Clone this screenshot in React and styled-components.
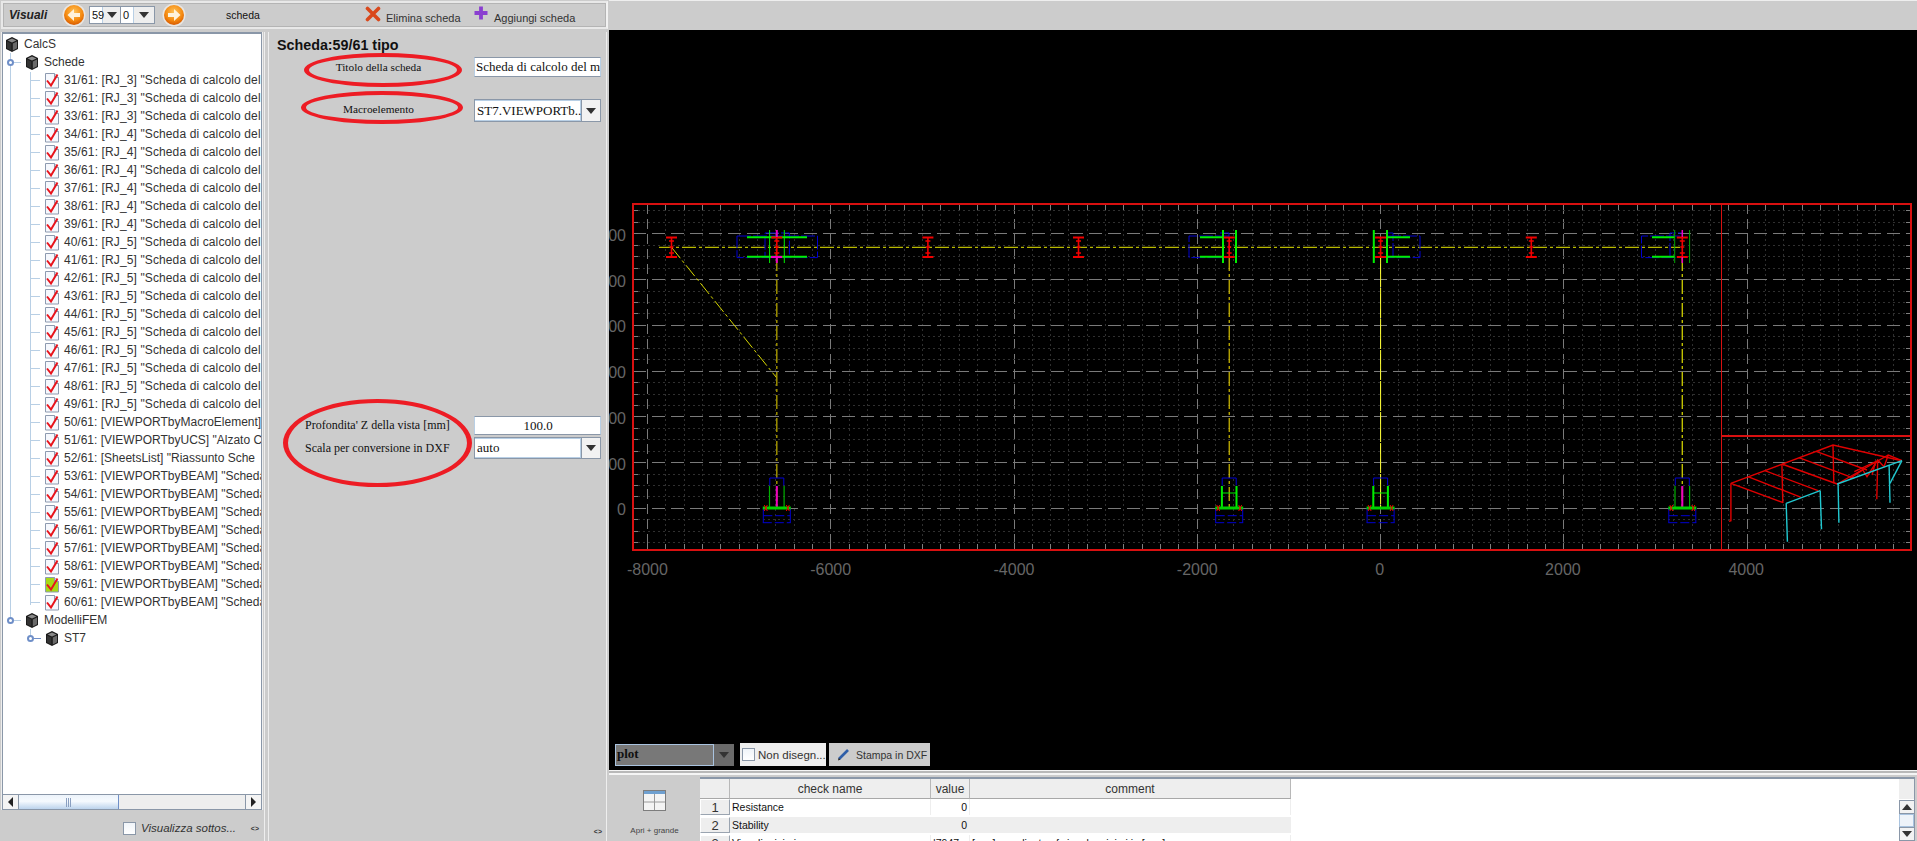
import React from "react";
import styled, { createGlobalStyle } from "styled-components";

const GlobalStyle = createGlobalStyle`
  html, body {
    margin: 0;
    padding: 0;
    background: #cccccc;
    overflow: hidden;
  }
  * {
    box-sizing: border-box;
  }
`;

const Page = styled.div`
  width: 1917px;
  height: 841px;
  display: grid;
  grid-template-columns: 609px 1308px;
  overflow: hidden;
  background: #cccccc;
  color: #333333;
  font-family: "Liberation Sans", Arial, sans-serif;
  font-size: 12px;
`;

const LeftColumn = styled.div`
  display: flex;
  flex-direction: column;
  height: 841px;
  padding: 1px 0 0 1px;
`;

const Toolbar = styled.div`
  height: 28px;
  width: 607px;
  flex: none;
  display: flex;
  align-items: center;
  border: 2px solid #e8e8e8;
  border-right-color: #f2f2f2;
  box-shadow: inset 0 0 0 1px #b4b4b4;
  padding: 0 0 0 6px;
`;

const ToolbarTitle = styled.span`
  font-weight: bold;
  font-style: italic;
  font-size: 12px;
  width: 53px;
  color: #222222;
`;

const NavIcon = styled.svg`
  width: 24px;
  height: 24px;
  flex: none;
`;

const Spinner = styled.div`
  display: flex;
  height: 18px;
  margin: 0 7px 0 3px;
  border: 1px solid #8a97a8;
  background: #eeeeee;
`;

const SpinValue = styled.span`
  width: ${(p) => p.$w}px;
  background: #ffffff;
  font-size: 11px;
  line-height: 16px;
  color: #111111;
  padding-left: 2px;
  border-right: 1px solid #b8cfe5;
`;

const SpinArrow = styled.span`
  width: ${(p) => p.$w}px;
  display: flex;
  align-items: center;
  justify-content: center;
  border-right: 1px solid #8a97a8;
  &:last-child {
    border-right: 0;
  }
`;

const ArrowDown = styled.i`
  width: 0;
  height: 0;
  border-left: 5px solid transparent;
  border-right: 5px solid transparent;
  border-top: 6px solid #333333;
`;

const ArrowUp = styled(ArrowDown)`
  border-top: 0;
  border-bottom: 6px solid #333333;
`;

const SheetWord = styled.span`
  font-size: 10.5px;
  color: #111111;
  margin-left: 40px;
  width: 139px;
`;

const ActionIcon = styled.svg`
  width: 16px;
  height: 16px;
  flex: none;
  margin-top: ${(p) => p.$top || 0}px;
`;

const ActionText = styled.span`
  font-size: 11px;
  color: #333333;
  margin: 5px 0 0 5px;
  width: ${(p) => p.$w}px;
`;

const Body = styled.div`
  flex: 1;
  display: grid;
  grid-template-columns: 264px 1fr;
  column-gap: 3px;
  padding-top: 3px;
  min-height: 0;
`;

const TreePanel = styled.div`
  display: flex;
  flex-direction: column;
  border-right: 1px solid #eeeeee;
`;

const TreeBox = styled.div`
  height: 778px;
  flex: none;
  margin-left: 1px;
  display: flex;
  flex-direction: column;
  background: #ffffff;
  border: 1px solid #8a97a8;
  border-top-width: 2px;
  border-bottom: 0;
  width: 260px;
  box-shadow: -1px 0 0 #eeeeee, 1px 0 0 #eeeeee;
`;

const Tree = styled.div`
  flex: 1;
  position: relative;
  overflow: hidden;
  padding-top: 1px;
`;

const TreeRow = styled.div`
  position: relative;
  height: 18px;
  display: flex;
  align-items: center;
  gap: 4px;
  padding-left: ${(p) => p.$level * 20 + 1}px;
  white-space: nowrap;
  &::before {
    content: "";
    display: ${(p) => (p.$leaf ? "block" : "none")};
    position: absolute;
    left: 27px;
    top: 9px;
    width: 10px;
    border-top: 1px solid #b8cfe5;
  }
`;

const RowText = styled.span`
  font-size: 12px;
  color: #333333;
  letter-spacing: ${(p) => p.$spacing || 0}px;
`;

const TreeLine = styled.span`
  position: absolute;
  left: ${(p) => p.$x}px;
  top: ${(p) => p.$y}px;
  height: ${(p) => p.$h}px;
  border-left: 1px solid #b8cfe5;
`;

const Handle = styled.span`
  position: absolute;
  left: ${(p) => p.$x}px;
  top: 6px;
  width: 7px;
  height: 7px;
  border-radius: 50%;
  background: #ffffff;
  border: 2px solid #6f8fc8;
  &::after {
    content: "";
    position: absolute;
    left: 5px;
    top: 1px;
    width: 7px;
    border-top: 1px solid ${(p) => (p.$closed ? "#6f8fc8" : "#b8cfe5")};
  }
`;

const RowIcon = styled.svg`
  width: 16px;
  height: 17px;
  flex: none;
`;

const HScroll = styled.div`
  height: 16px;
  flex: none;
  display: flex;
  border-top: 1px solid #8a97a8;
  border-bottom: 1px solid #8a97a8;
  background: #eeeeee;
`;

const HButton = styled.div`
  width: 16px;
  display: flex;
  align-items: center;
  justify-content: center;
  background: #f4f4f4;
  border-right: 1px solid #8a97a8;
  &:last-child {
    border-right: 0;
    border-left: 1px solid #8a97a8;
  }
`;

const ArrowLeft = styled.i`
  width: 0;
  height: 0;
  border-top: 5px solid transparent;
  border-bottom: 5px solid transparent;
  border-right: 5px solid #222222;
`;

const ArrowRight = styled.i`
  width: 0;
  height: 0;
  border-top: 5px solid transparent;
  border-bottom: 5px solid transparent;
  border-left: 5px solid #222222;
`;

const HThumb = styled.div`
  width: 100px;
  display: flex;
  align-items: center;
  justify-content: center;
  gap: 1px;
  background: linear-gradient(#ecf3fb, #f6fafe 45%, #bcd3ec);
  border-right: 1px solid #6f8fc8;
`;

const Grip = styled.i`
  width: 1px;
  height: 9px;
  background: #8a9fc0;
`;

const HTrack = styled.div`
  flex: 1;
`;

const TreeFooter = styled.div`
  flex: 1;
  display: flex;
  align-items: center;
  padding: 5px 5px 0 122px;
`;

const CheckBox = styled.span`
  width: 13px;
  height: 13px;
  flex: none;
  border: 1px solid #8a97a8;
  background: linear-gradient(#f0f4f9, #ffffff);
`;

const FooterLabel = styled.span`
  font-size: 11.5px;
  font-style: italic;
  margin-left: 5px;
  width: 110px;
  color: #333333;
`;

const Grabber = styled.span`
  font-size: 7px;
  font-weight: bold;
  color: #333333;
  letter-spacing: 0;
`;

const FormPanel = styled.div`
  position: relative;
  display: flex;
  flex-direction: column;
  padding-top: 4px;
  width: 339px;
  border-left: 1px solid #eeeeee;
  border-right: 1px solid #eeeeee;
`;

const FormTitle = styled.h1`
  margin: 0 0 0 8px;
  height: 18px;
  line-height: 18px;
  font-size: 14.3px;
  font-weight: bold;
  color: #111111;
`;

const FieldRow = styled.div`
  display: grid;
  grid-template-columns: 205px 127px;
  align-items: center;
  margin-top: ${(p) => p.$top}px;
  height: ${(p) => p.$h}px;
`;

const FieldLabel = styled.label`
  font-family: "Liberation Serif", "Times New Roman", serif;
  font-size: ${(p) => p.$size}px;
  color: #111111;
  text-align: ${(p) => (p.$left ? "left" : "center")};
  padding-left: ${(p) => (p.$left ? "36px" : "14px")};
  padding-bottom: ${(p) => p.$lift || 0}px;
`;

const TextValue = styled.div`
  height: 100%;
  background: #ffffff;
  border: 1px solid #8a97a8;
  border-left-color: #b8cfe5;
  border-right-color: #b8cfe5;
  font-family: "Liberation Serif", "Times New Roman", serif;
  font-size: 13px;
  color: #111111;
  display: flex;
  align-items: center;
  justify-content: ${(p) => (p.$center ? "center" : "flex-start")};
  padding-left: 1px;
  white-space: nowrap;
  overflow: hidden;
`;

const Combo = styled.div`
  height: 100%;
  display: flex;
  border: 1px solid #8a97a8;
  background: #ffffff;
`;

const ComboValue = styled.span`
  flex: 1;
  min-width: 0;
  border: 1px solid #b8cfe5;
  border-left-width: 0;
  font-family: "Liberation Serif", "Times New Roman", serif;
  font-size: 13px;
  color: #111111;
  display: flex;
  align-items: center;
  padding-left: 2px;
  white-space: nowrap;
`;

const ComboButton = styled.span`
  width: 19px;
  flex: none;
  display: flex;
  align-items: center;
  justify-content: center;
  background: #f2f2f2;
  border-left: 1px solid #8a97a8;
`;

const Ellipse = styled.span`
  position: absolute;
  left: ${(p) => p.$x}px;
  top: ${(p) => p.$y}px;
  width: ${(p) => p.$w}px;
  height: ${(p) => p.$h}px;
  border: 4.5px solid #ed1c24;
  border-left-width: 5.5px;
  border-right-width: 5.5px;
  border-radius: 50%;
  pointer-events: none;
`;

const FormGrabber = styled(Grabber)`
  position: absolute;
  right: 4px;
  bottom: 6px;
`;

const RightColumn = styled.div`
  display: flex;
  flex-direction: column;
  height: 841px;
`;

const TopStrip = styled.div`
  height: 30px;
  flex: none;
  border-top: 1px solid #eeeeee;
`;

const Canvas = styled.div`
  position: relative;
  height: 740px;
  flex: none;
  background: #000000;
`;

const Plot = styled.svg`
  display: block;
  width: 1308px;
  height: 740px;
`;

const CanvasBar = styled.div`
  position: absolute;
  left: 6px;
  top: 713px;
  display: flex;
  gap: 3px;
  height: 23px;
`;

const PlotCombo = styled.div`
  width: 119px;
  height: 22px;
  margin-top: 1px;
  margin-right: 3px;
  display: flex;
  background: #6a6a6a;
`;

const PlotValue = styled.span`
  flex: 1;
  background: #787878;
  border: 1px solid #a9c3df;
  font-family: "Liberation Serif", "Times New Roman", serif;
  font-weight: bold;
  font-size: 13px;
  color: #111111;
  line-height: 18px;
  padding-left: 1px;
`;

const PlotArrow = styled.span`
  width: 20px;
  display: flex;
  align-items: center;
  justify-content: center;
`;

const PlotToggle = styled.div`
  width: 86px;
  display: flex;
  align-items: center;
  padding-left: 2px;
  background: #eeeeee;
  gap: 3px;
  font-size: 11.5px;
  color: #333333;
  white-space: nowrap;
`;

const PrintButton = styled.div`
  width: 101px;
  display: flex;
  align-items: center;
  padding-left: 8px;
  background: #cccccc;
  gap: 5px;
  font-size: 10.5px;
  color: #333333;
`;

const Splitter = styled.div`
  height: 5px;
  flex: none;
  background: linear-gradient(#f4f4f4 0 1px, #b8b8b8 1px 3px, #f4f4f4 3px);
`;

const TablePanel = styled.div`
  flex: 1;
  display: grid;
  grid-template-columns: 91px 1fr;
  padding-top: 2px;
  min-height: 0;
`;

const TableSide = styled.div`
  display: flex;
  flex-direction: column;
  align-items: center;
  padding-top: 13px;
`;

const SideLabel = styled.span`
  font-size: 8px;
  margin-top: 15px;
  color: #444444;
`;

const TableFrame = styled.div`
  display: grid;
  grid-template-columns: 1fr 15px;
  background: #ffffff;
  border-top: 2px solid #8a97a8;
  border-right: 1px solid #8a97a8;
  margin-right: 2px;
  overflow: hidden;
`;

const DataTable = styled.div`
  display: grid;
  grid-template-columns: 30px 201px 39px 321px;
  grid-auto-rows: 18px;
  width: 591px;
  align-content: start;
`;

const HeadCell = styled.div`
  height: 20px;
  background: #eeeeee;
  border-right: 1px solid #b8b8b8;
  border-bottom: 1px solid #a8a8a8;
  font-size: 12px;
  line-height: 20px;
  text-align: center;
  color: #333333;
`;

const RowHead = styled.div`
  background: #eeeeee;
  border: 1px solid #ffffff;
  border-right-color: #9aa4b0;
  border-bottom-color: #9aa4b0;
  font-size: 13px;
  line-height: 16px;
  text-align: center;
  color: #333333;
  margin-top: 2px;
`;

const Cell = styled.div`
  margin-top: 2px;
  background: ${(p) => (p.$odd ? "#eeeeee" : "#ffffff")};
  border-right: 1px solid #eeeeee;
  font-size: 10.5px;
  line-height: 17px;
  padding: 0 2px;
  text-align: ${(p) => (p.$right ? "right" : "left")};
  color: #111111;
  white-space: nowrap;
  overflow: hidden;
`;

const VScroll = styled.div`
  display: flex;
  flex-direction: column;
`;

const VCorner = styled.div`
  height: 21px;
  background: #eeeeee;
  border-bottom: 1px solid #ffffff;
`;

const VButton = styled.div`
  height: 14px;
  display: flex;
  align-items: center;
  justify-content: center;
  background: #f2f2f2;
  border: 1px solid #8a97a8;
  border-right: 0;
`;

const VThumb = styled.div`
  height: 13px;
  background: #eef3f9;
  border: 1px solid #a9c3df;
`;

const sheetLabels = () => {
  const rows = [];
  for (let n = 31; n <= 49; n++) {
    const rj = n <= 33 ? 3 : n <= 39 ? 4 : 5;
    rows.push({ n, spacing: 0.12, text: `${n}/61: [RJ_${rj}] "Scheda di calcolo del` });
  }
  rows.push({ n: 50, text: "50/61: [VIEWPORTbyMacroElement]" });
  rows.push({ n: 51, text: '51/61: [VIEWPORTbyUCS] "Alzato Co' });
  rows.push({ n: 52, text: '52/61: [SheetsList] "Riassunto Sche' });
  for (let n = 53; n <= 60; n++) {
    rows.push({ n, text: `${n}/61: [VIEWPORTbyBEAM] "Scheda` });
  }
  return rows;
};

const tableRows = [
  ["Resistance", "0", ""],
  ["Stability", "0", ""],
  ["Vincoli minimi", "|7947...", "[mm] coordinate of vincolo minimi in [mm]"],
];

const CubeIcon = () => (
  <RowIcon viewBox="0 0 16 17">
    <path d="M8 1 L14 4 V13 L8 16 L2 13 V4 Z" fill="#1c1c1c" />
    <path d="M8 2.4 L12.4 4.4 L8 6.6 L3.6 4.4 Z" fill="#8a8a8a" />
    <path d="M3 5.4 L7.3 7.6 V14.4 L3 12.3 Z" fill="#333333" />
    <path d="M8.8 7.6 L13 5.4 V12.3 L8.8 14.4 Z" fill="#6a6a6a" />
  </RowIcon>
);

const SheetIcon = ({ active }) => (
  <RowIcon viewBox="0 0 16 17">
    <path d="M1.5 1.5 H10.5 L14.5 5.5 V16 H1.5 Z" fill={active ? "#a6d916" : "#f6f8fd"} stroke="#8d9ab0" />
    <path d="M10.5 1.5 V5.5 H14.5" fill="#dfe6f2" stroke="#8d9ab0" />
    <path d="M3 8.5 L7 13.5 L13.5 2.5" fill="none" stroke="#e8141c" strokeWidth="2" />
  </RowIcon>
);

const NavArrow = ({ id, flip }) => (
  <NavIcon viewBox="0 0 24 24">
    <defs>
      <radialGradient id={id} cx="50%" cy="35%" r="65%">
        <stop offset="0%" stopColor="#ffc45a" />
        <stop offset="65%" stopColor="#f58a10" />
        <stop offset="100%" stopColor="#d85a00" />
      </radialGradient>
    </defs>
    <circle cx="12" cy="12" r="11.5" fill="#e9e6e2" />
    <circle cx="12" cy="12" r="10" fill={`url(#${id})`} />
    <path
      d={flip ? "M6 10 H12 V6 L18.5 12 L12 18 V14 H6 Z" : "M18 10 H12 V6 L5.5 12 L12 18 V14 H18 Z"}
      fill="#fff3dc"
    />
  </NavIcon>
);

const px = (u) => 1380.6 + u * 18.33;
const py = (k) => 508.4 - k * 11.44;
const FRAME = { left: 633, top: 204, right: 1911, bottom: 550 };

const range = (a, b) => Array.from({ length: b - a + 1 }, (_, i) => a + i);

const GridLines = () => (
  <g shapeRendering="crispEdges">
    {range(-40, 28).map((k) => {
      const major = k % 10 === 0;
      return (
        <g key={`v${k}`}>
          <line
            x1={px(k)}
            x2={px(k)}
            y1={FRAME.top}
            y2={FRAME.bottom}
            stroke={major ? "#7a7a7a" : "#303030"}
            strokeDasharray={major ? "10 5" : "2 3"}
          />
          <line x1={px(k)} x2={px(k)} y1={FRAME.top} y2={FRAME.top + 6} stroke="#808080" />
          <line x1={px(k)} x2={px(k)} y1={FRAME.bottom - 6} y2={FRAME.bottom} stroke="#808080" />
        </g>
      );
    })}
    {range(-3, 26).map((k) => {
      const major = k % 4 === 0;
      return (
        <g key={`h${k}`}>
          <line
            x1={FRAME.left}
            x2={FRAME.right}
            y1={py(k)}
            y2={py(k)}
            stroke={major ? "#7a7a7a" : "#303030"}
            strokeDasharray={major ? "13 6" : "2 3"}
          />
          <line x1={FRAME.left} x2={FRAME.left + 5} y1={py(k)} y2={py(k)} stroke="#808080" />
          <line x1={FRAME.right - 5} x2={FRAME.right} y1={py(k)} y2={py(k)} stroke="#808080" />
        </g>
      );
    })}
  </g>
);

const IBeam = ({ x }) => (
  <g stroke="#f00000" strokeWidth="1.6" fill="none">
    <path d={`M${x - 5.5} 237.5 H${x + 5.5} M${x - 5.5} 257 H${x + 5.5}`} strokeWidth="2" />
    <path d={`M${x} 237 V257 M${x - 2.5} 241 H${x + 2.5} M${x - 2.5} 253 H${x + 2.5} M${x - 2} 247 H${x + 2}`} />
  </g>
);

const Base = ({ x, bar, bright }) => (
  <g fill="none">
    <path
      d={`M${x - 7} 485.5 V478 H${x + 7} V485.5 M${x - 13.5} 508 V522.7 M${x + 13.5} 508 V522.7`}
      stroke="#0000d0"
    />
    <path
      d={`M${x - 13.5} 515.7 H${x + 13.5} M${x - 14} 522.7 H${x + 14}`}
      stroke="#0000d0"
      strokeDasharray="9 3"
    />
    <path
      d={`M${x - 7.3} 486 V508 M${x + 7.3} 486 V508`}
      stroke={bright ? "#00f000" : "#00b000"}
      strokeWidth={bright ? 2 : 1.2}
    />
    {bar && <path d={`M${x - 7} 493 H${x + 7}`} stroke="#00f000" />}
    {!bar && <path d={`M${x} 486 V508`} stroke="#f000c0" strokeWidth="2" />}
    <path d={`M${x - 14} 508 H${x + 14}`} stroke="#00d000" strokeWidth="3" />
    <path
      d={`M${x - 12.5} 505 l3 6 m0 -6 l-3 6 M${x + 9.5} 505 l3 6 m0 -6 l-3 6`}
      stroke="#f00000"
    />
  </g>
);

// coordinates read from the small 3d view, origin top-left of that inset
const insetRed = [
  [[1130, 190], [1370, 75], [1532, 122]],
  [[1130, 190], [1253, 248]],
  [[1170, 170], [1295, 232]],
  [[1210, 152], [1335, 212]],
  [[1250, 132], [1380, 192]],
  [[1290, 113], [1420, 175]],
  [[1330, 94], [1450, 150]],
  [[1250, 132], [1252, 248]],
  [[1370, 75], [1372, 190]],
  [[1130, 190], [1130, 302], [1126, 304]],
  [[1475, 120], [1473, 238]],
  [[1380, 192], [1500, 105], [1532, 122]],
  [[1410, 175], [1440, 150], [1450, 170], [1475, 120], [1490, 140], [1500, 105]],
  [[1420, 155], [1470, 125], [1462, 165]],
];
const insetCyan = [
  [[1260, 250], [1340, 212]],
  [[1380, 192], [1532, 122]],
  [[1260, 250], [1263, 365]],
  [[1340, 212], [1343, 328]],
  [[1382, 192], [1384, 308]],
  [[1502, 135], [1504, 248]],
  [[1532, 122], [1504, 190]],
];

const insetPoints = (pts) =>
  pts.map(([x, y]) => `${(1250 + x / 2.35).toFixed(1)},${(420 + y / 3).toFixed(1)}`).join(" ");

const DrawingPlot = () => (
  <Plot viewBox="609 30 1308 740">
    <GridLines />

    <g fill="none" strokeDasharray="14 3 3 3">
      <path d="M659 247.3 H1680" stroke="#b8b800" strokeWidth="1.3" />
      <path d="M671.5 247.3 L776.8 378" stroke="#d8d800" />
      <path d="M776.8 257 V508" stroke="#a89a00" strokeWidth="1.4" />
      <path d="M1229.2 257 V508" stroke="#ffe600" />
      <path d="M1380.6 257 V508" stroke="#ffff30" strokeDasharray="30 1" />
      <path d="M1682.3 257 V508" stroke="#c0c000" strokeWidth="1.4" />
    </g>

    <g fill="none" stroke="#0000d0" strokeDasharray="14 2">
      <path d="M737 236 H817.5 V257.6 H737 Z" />
      <path d="M765 233 H789.4 V257 H765 Z" />
      <path d="M1229 236 H1189 V257.6 H1229" />
      <path d="M1220 233 H1229 V257" />
      <path d="M1387 236 H1420 V257.6 H1387" />
      <path d="M1387 233 H1393 V257" />
      <path d="M1680 236 H1641.5 V257.6 H1680" />
      <path d="M1670 257 V233 H1683" />
    </g>

    <g fill="none" stroke="#00f000" strokeWidth="2">
      <path d="M747 237.3 H807 M747 256.7 H807" />
      <path d="M769.6 230 V263 M784.3 230 V263" strokeWidth="1" />
      <path d="M1200 237.3 H1223 M1200 256.7 H1223" />
      <path d="M1223 230 V263 M1236 230 V263" />
      <path d="M1373.8 230 V263 M1387 230 V263" />
      <path d="M1387 237.3 H1410 M1387 256.7 H1410" />
      <path d="M1652 237.3 H1675 M1652 256.7 H1675" />
      <path d="M1674.7 230 V263 M1689.6 230 V263" strokeWidth="1" stroke="#00a800" />
    </g>

    {[671.5, 776.8, 927.9, 1078.5, 1229.2, 1380.6, 1531.3, 1682.3].map((x) => (
      <IBeam key={x} x={x} />
    ))}

    <path d="M776.8 230 V237 M776.8 257 V263" stroke="#f000c0" strokeWidth="2" />
    <path d="M771 257 H782" stroke="#f000c0" strokeWidth="2" />
    <path d="M1682.3 230 V237 M1682.3 257 V263" stroke="#f000c0" strokeWidth="1.5" />

    <Base x={776.8} />
    <Base x={1229.2} bar bright />
    <Base x={1380.6} bar bright />
    <Base x={1682.3} />

    <g fill="none" stroke="#d81010" shapeRendering="crispEdges">
      <rect x={FRAME.left} y={FRAME.top} width={FRAME.right - FRAME.left} height={FRAME.bottom - FRAME.top} strokeWidth="2" />
      <path d={`M1721.5 ${FRAME.top} V${FRAME.bottom} M1721.5 436 H${FRAME.right}`} strokeWidth="1.5" />
    </g>

    <g fill="none" strokeWidth="1.4">
      {insetRed.map((pts, i) => (
        <polyline key={i} points={insetPoints(pts)} stroke="#e00000" />
      ))}
      {insetCyan.map((pts, i) => (
        <polyline key={i} points={insetPoints(pts)} stroke="#20c8d0" />
      ))}
    </g>

    <g fontFamily="'Liberation Sans', Arial, sans-serif" fontSize="16" fill="#666666">
      {[-8000, -6000, -4000, -2000, 0, 2000, 4000].map((v) => (
        <text key={v} x={px(v / 200) + (v < 0 ? 0 : -1)} y="575" textAnchor="middle">
          {v}
        </text>
      ))}
      {[0, 500, 1000, 1500, 2000, 2500, 3000].map((v, i) => (
        <text key={v} x="626" y={py(i * 4) + 7} textAnchor="end">
          {v}
        </text>
      ))}
    </g>
  </Plot>
);

const App = () => (
  <>
    <GlobalStyle />
    <Page>
      <LeftColumn>
        <Toolbar>
          <ToolbarTitle>Visuali</ToolbarTitle>
          <NavArrow id="navPrev" />
          <Spinner>
            <SpinValue $w={13}>59</SpinValue>
            <SpinArrow $w={18}>
              <ArrowDown />
            </SpinArrow>
            <SpinValue $w={13}>0</SpinValue>
            <SpinArrow $w={20}>
              <ArrowDown />
            </SpinArrow>
          </Spinner>
          <NavArrow id="navNext" flip />
          <SheetWord>scheda</SheetWord>
          <ActionIcon viewBox="0 0 16 16" $top={-2}>
            <path d="M2.5 2.5 L13.5 13.5 M13.5 2.5 L2.5 13.5" stroke="#d9481c" strokeWidth="3.6" strokeLinecap="round" />
          </ActionIcon>
          <ActionText $w={87}>Elimina scheda</ActionText>
          <ActionIcon viewBox="0 0 16 16" $top={-4}>
            <path d="M8 1.5 V14.5 M1.5 8 H14.5" stroke="#8a3fd0" strokeWidth="3.8" />
          </ActionIcon>
          <ActionText $w={85}>Aggiungi scheda</ActionText>
        </Toolbar>
        <Body>
          <TreePanel>
            <TreeBox>
              <Tree>
                <TreeLine $x={7} $y={19} $h={568} />
                <TreeLine $x={27} $y={38} $h={533} />
                <TreeLine $x={27} $y={595} $h={10} />
                <TreeRow $level={0}>
                  <CubeIcon />
                  <RowText>CalcS</RowText>
                </TreeRow>
                <TreeRow $level={1}>
                  <Handle $x={4} />
                  <CubeIcon />
                  <RowText>Schede</RowText>
                </TreeRow>
                {sheetLabels().map((row) => (
                  <TreeRow key={row.n} $level={2} $leaf>
                    <SheetIcon active={row.n === 59} />
                    <RowText $spacing={row.spacing}>{row.text}</RowText>
                  </TreeRow>
                ))}
                <TreeRow $level={1}>
                  <Handle $x={4} />
                  <CubeIcon />
                  <RowText>ModelliFEM</RowText>
                </TreeRow>
                <TreeRow $level={2}>
                  <Handle $x={24} $closed />
                  <CubeIcon />
                  <RowText>ST7</RowText>
                </TreeRow>
              </Tree>
              <HScroll>
                <HButton>
                  <ArrowLeft />
                </HButton>
                <HThumb>
                  <Grip />
                  <Grip />
                  <Grip />
                </HThumb>
                <HTrack />
                <HButton>
                  <ArrowRight />
                </HButton>
              </HScroll>
            </TreeBox>
            <TreeFooter>
              <CheckBox />
              <FooterLabel>Visualizza sottos...</FooterLabel>
              <Grabber>{"<>"}</Grabber>
            </TreeFooter>
          </TreePanel>
          <FormPanel>
            <FormTitle>Scheda:59/61 tipo</FormTitle>
            <FieldRow $top={3} $h={20}>
              <FieldLabel $size={11.3}>Titolo della scheda</FieldLabel>
              <TextValue>Scheda di calcolo del m</TextValue>
            </FieldRow>
            <FieldRow $top={22} $h={23}>
              <FieldLabel $size={11.3} $lift={3}>
                Macroelemento
              </FieldLabel>
              <Combo>
                <ComboValue>ST7.VIEWPORTb...</ComboValue>
                <ComboButton>
                  <ArrowDown />
                </ComboButton>
              </Combo>
            </FieldRow>
            <FieldRow $top={294} $h={19}>
              <FieldLabel $size={12} $left>
                Profondita' Z della vista [mm]
              </FieldLabel>
              <TextValue $center>100.0</TextValue>
            </FieldRow>
            <FieldRow $top={2} $h={22}>
              <FieldLabel $size={12} $left>
                Scala per conversione in DXF
              </FieldLabel>
              <Combo>
                <ComboValue>auto</ComboValue>
                <ComboButton>
                  <ArrowDown />
                </ComboButton>
              </Combo>
            </FieldRow>
            <Ellipse $x={35} $y={21} $w={158} $h={34} />
            <Ellipse $x={32} $y={59} $w={162} $h={33} />
            <Ellipse $x={14} $y={367} $w={189} $h={88} />
            <FormGrabber>{"<>"}</FormGrabber>
          </FormPanel>
        </Body>
      </LeftColumn>
      <RightColumn>
        <TopStrip />
        <Canvas>
          <DrawingPlot />
          <CanvasBar>
            <PlotCombo>
              <PlotValue>plot</PlotValue>
              <PlotArrow>
                <ArrowDown />
              </PlotArrow>
            </PlotCombo>
            <PlotToggle>
              <CheckBox />
              Non disegn...
            </PlotToggle>
            <PrintButton>
              <svg width="14" height="13" viewBox="0 0 14 13">
                <path d="M2 11 L11 2" stroke="#2f5fa8" strokeWidth="2.6" />
                <path d="M1 12.5 L1.6 10 L3.4 11.6 Z" fill="#222222" />
              </svg>
              Stampa in DXF
            </PrintButton>
          </CanvasBar>
        </Canvas>
        <Splitter />
        <TablePanel>
          <TableSide>
            <svg width="23" height="21" viewBox="0 0 23 21">
              <rect x="0.5" y="0.5" width="22" height="20" fill="#f4f4f4" stroke="#7d7d7d" />
              <rect x="1" y="1" width="21" height="3" fill="#6fa0d0" />
              <path d="M11.5 4 V20 M1 12 H22" stroke="#9a9a9a" />
            </svg>
            <SideLabel>Apri + grande</SideLabel>
          </TableSide>
          <TableFrame>
            <DataTable>
              <HeadCell />
              <HeadCell>check name</HeadCell>
              <HeadCell>value</HeadCell>
              <HeadCell>comment</HeadCell>
              {tableRows.map(([name, value, comment], i) => (
                <React.Fragment key={name}>
                  <RowHead>{i + 1}</RowHead>
                  <Cell $odd={i === 1}>{name}</Cell>
                  <Cell $odd={i === 1} $right>
                    {value}
                  </Cell>
                  <Cell $odd={i === 1}>{comment}</Cell>
                </React.Fragment>
              ))}
            </DataTable>
            <VScroll>
              <VCorner />
              <VButton>
                <ArrowUp />
              </VButton>
              <VThumb />
              <VButton>
                <ArrowDown />
              </VButton>
            </VScroll>
          </TableFrame>
        </TablePanel>
      </RightColumn>
    </Page>
  </>
);

export default App;
